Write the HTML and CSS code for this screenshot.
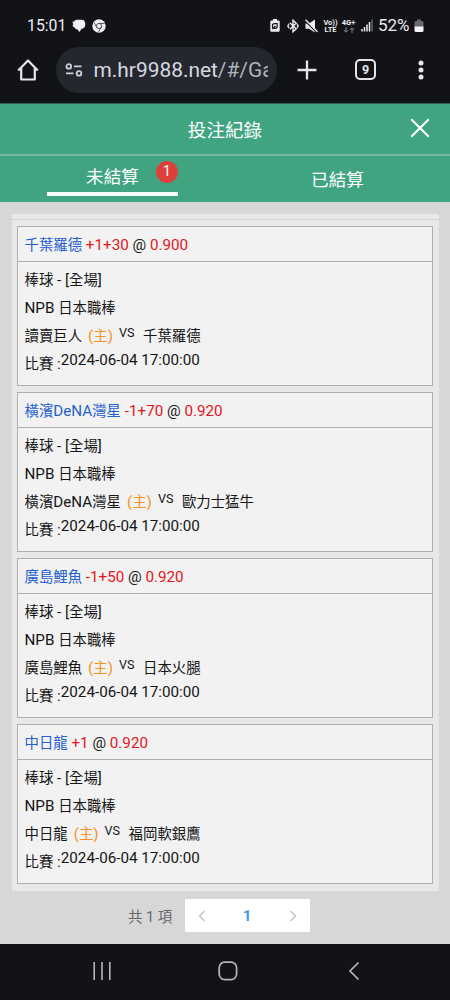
FILE: index.html
```html
<!DOCTYPE html>
<html lang="zh-Hant">
<head>
<meta charset="utf-8">
<title>投注紀錄</title>
<link rel="stylesheet" href="styles.css">
</head>
<body>
<div class="phone">
  <div class="chrome">
    <div class="status">
      <span class="clock">15:01</span>
      <svg class="ic-chat" width="14" height="14" viewBox="0 0 14 14"><path d="M5 .8h4.500C12.200.8 13.300 2.800 13.300 5.200s-1.300 4.600-3.800 4.600L7.500 13 5.300 10.300C3.800 10.200 2.800 9.500 2.400 8.200L.4 7l.9-1.500L.4 2.600 2 2.700C2.600 1.500 3.600.8 5 .8z" fill="#f1f1f3"/></svg>
      <svg class="ic-chrome" width="14" height="14" viewBox="0 0 14 14"><circle cx="7" cy="7" r="6.700" fill="#f1f1f3"/><g fill="none" stroke="#44454a" stroke-width=".9"><circle cx="7" cy="7" r="2.600"/><path d="M7 4.400h5.800M4.750 8.300 1.900 3.300M9.250 8.300 6.400 13.200"/></g></svg>
      <span class="fill"></span>
      <svg class="ic-saver" width="10" height="13" viewBox="0 0 10 13"><path d="M3 0h4v1.500h1.500Q9.700 1.500 9.700 2.800v8.700q0 1.300-1.200 1.300h-7Q.3 12.800.3 11.500V2.800q0-1.300 1.200-1.300H3z" fill="#eee"/><path d="M2.500 9.500V6.500q0-1.800 2.400-1.800h2.300v2.500q0 2-2 2.100H4M2.500 10l3-3" fill="none" stroke="#17181c" stroke-width="1.200"/></svg>
      <svg class="ic-bt" width="12" height="14" viewBox="0 0 12 14"><path d="m2.800 3.700 6.400 6L6 12.800V1.200l3.200 3.100-6.400 6" fill="none" stroke="#eee" stroke-width="1.400"/><path d="M.2 7h2M9.800 7h2M1 5l1 .8M11 5l-1 .8M1 9l1-.8M11 9l-1-.8" stroke="#eee" stroke-width="1.300"/></svg>
      <svg class="ic-mute" width="13" height="14" viewBox="0 0 13 14"><path d="M.5 4.500h3.500l6-4v13L4 9.800H.5z" fill="#eee"/><path d="M0 1.800 12 13.800" stroke="#121317" stroke-width="1.300"/><path d="m.5.800 12 12" stroke="#eee" stroke-width="1.500"/></svg>
      <span class="net volte"><b>Vo))</b><b>LTE</b></span>
      <span class="net data"><b>4G+</b><svg width="12" height="6" viewBox="0 0 12 6"><path d="M3 0v5M.8 3 3 5.200 5.200 3M9 6V1M6.800 3 9 .8 11.200 3" fill="none" stroke="#85868a"/></svg></span>
      <svg class="ic-signal" width="12" height="13" viewBox="0 0 12 13"><path d="M1 10v2.500M3.500 8v4.500M6 5.500v7M8.500 3v9.500" stroke="#eee" stroke-width="1.500"/><path d="M11 .5v12" stroke="#67686c" stroke-width="1.500"/></svg>
      <span class="percent">52%</span>
      <svg class="ic-batt" width="10" height="14" viewBox="0 0 10 14"><path d="M3 .5h4V2h1.200Q9.500 2 9.500 3.500V8h-9V3.500Q.5 2 1.800 2H3z" fill="#68696d"/><path d="M.5 7.500h9v4q0 1.500-1.300 1.500H1.800Q.5 13 .5 11.500z" fill="#f4f4f4"/></svg>
    </div>
    <div class="toolbar">
      <svg class="ic-home" width="22" height="22" viewBox="0 0 22 22"><path d="M1.200 11.500 11 1.500 20.800 11.500M4.200 9v11.500h13.600V9" fill="none" stroke="#e6e6e9" stroke-width="2.200" stroke-linejoin="round"/></svg>
      <div class="address">
        <svg class="ic-tune" width="18" height="14" viewBox="0 0 18 14"><g fill="none" stroke="#cdd0d7" stroke-width="1.800"><circle cx="3.800" cy="3.400" r="2.300"/><path d="M9 3.400h7.500M1 10.400h7.500"/><circle cx="14" cy="10.400" r="2.300"/></g></svg>
        <span class="url">m.hr9988.net<span class="path">/#/Ga</span></span>
      </div>
      <svg class="ic-plus" width="20" height="20" viewBox="0 0 20 20"><path d="M10 .5v19M.5 10h19" stroke="#e6e6e9" stroke-width="2.300"/></svg>
      <span class="tabcount">9</span>
      <svg class="ic-more" width="6" height="20" viewBox="0 0 6 20"><g fill="#e6e6e9"><circle cx="3" cy="2.900" r="2.500"/><circle cx="3" cy="10" r="2.500"/><circle cx="3" cy="17.100" r="2.500"/></g></svg>
    </div>
  </div>

  <header class="header">
    <div class="title">投注紀錄</div>
    <svg class="close" width="20" height="20" viewBox="0 0 20 20"><path d="m1.200 1.200 17.600 17.600M18.800 1.200 1.200 18.800" stroke="#fff" stroke-width="2"/></svg>
  </header>
  <nav class="tabs">
    <div class="tab active"><span class="label">未結算</span><span class="badge">1</span></div>
    <div class="tab"><span class="label">已結算</span></div>
  </nav>

  <main class="content">
    <div class="list">
      <article class="card">
        <div class="pick"><span class="team"><i>千葉羅德</i></span> <span class="odds">+1+30</span> @ <span class="odds">0.900</span></div>
        <div class="detail">
          <p><i>棒球</i> - [<i>全場</i>]</p>
          <p>NPB <i>日本職棒</i></p>
          <p class="match"><span><i>讀賣巨人</i></span><span class="home">(<i>主</i>)</span><span class="vs">VS</span><span><i>千葉羅德</i></span></p>
          <p class="time"><span><i>比賽</i> :</span><span class="date">2024-06-04 17:00:00</span></p>
        </div>
      </article>
      <article class="card">
        <div class="pick"><span class="team"><i>橫濱</i>DeNA<i>灣星</i></span> <span class="odds">-1+70</span> @ <span class="odds">0.920</span></div>
        <div class="detail">
          <p><i>棒球</i> - [<i>全場</i>]</p>
          <p>NPB <i>日本職棒</i></p>
          <p class="match"><span><i>橫濱</i>DeNA<i>灣星</i></span><span class="home">(<i>主</i>)</span><span class="vs">VS</span><span><i>歐力士猛牛</i></span></p>
          <p class="time"><span><i>比賽</i> :</span><span class="date">2024-06-04 17:00:00</span></p>
        </div>
      </article>
      <article class="card">
        <div class="pick"><span class="team"><i>廣島鯉魚</i></span> <span class="odds">-1+50</span> @ <span class="odds">0.920</span></div>
        <div class="detail">
          <p><i>棒球</i> - [<i>全場</i>]</p>
          <p>NPB <i>日本職棒</i></p>
          <p class="match"><span><i>廣島鯉魚</i></span><span class="home">(<i>主</i>)</span><span class="vs">VS</span><span><i>日本火腿</i></span></p>
          <p class="time"><span><i>比賽</i> :</span><span class="date">2024-06-04 17:00:00</span></p>
        </div>
      </article>
      <article class="card">
        <div class="pick"><span class="team"><i>中日龍</i></span> <span class="odds">+1</span> @ <span class="odds">0.920</span></div>
        <div class="detail">
          <p><i>棒球</i> - [<i>全場</i>]</p>
          <p>NPB <i>日本職棒</i></p>
          <p class="match"><span><i>中日龍</i></span><span class="home">(<i>主</i>)</span><span class="vs">VS</span><span><i>福岡軟銀鷹</i></span></p>
          <p class="time"><span><i>比賽</i> :</span><span class="date">2024-06-04 17:00:00</span></p>
        </div>
      </article>
    </div>
    <div class="pagination">
      <span class="total">共 1 項</span>
      <div class="pager">
        <svg width="8" height="12" viewBox="0 0 8 12"><path d="M6.500 1 1.500 6l5 5" fill="none" stroke="#bcbfc4" stroke-width="1.300"/></svg>
        <b>1</b>
        <svg width="8" height="12" viewBox="0 0 8 12"><path d="m1.500 1 5 5-5 5" fill="none" stroke="#bcbfc4" stroke-width="1.300"/></svg>
      </div>
    </div>
  </main>

  <footer class="navbar">
    <svg width="18" height="18" viewBox="0 0 18 18"><path d="M1.200 0v18M9 0v18M16.800 0v18" stroke="#b6b6b8" stroke-width="1.600"/></svg>
    <svg class="nav-home" width="20" height="20" viewBox="0 0 20 20"><rect x="1.200" y="1.200" width="17.400" height="17.400" rx="5.500" fill="none" stroke="#b6b6b8" stroke-width="1.700"/></svg>
    <svg width="12" height="20" viewBox="0 0 12 20"><path d="M10.500 1.500 2 10l8.500 8.500" fill="none" stroke="#b6b6b8" stroke-width="1.700"/></svg>
  </footer>
</div>
</body>
</html>
```
FILE: styles.css
```css
* { box-sizing: border-box; }
body {
  margin: 0;
  font-family: Roboto, "Noto Sans CJK TC", sans-serif;
  font-size: 15.2px;
  color: #161616;
}
svg { display: block; flex: none; }
i { font-style: normal; font-size: 14.400px; }
p { margin: 0; }
.phone {
  width: 450px;
  height: 1000px;
  display: flex;
  flex-direction: column;
  overflow: hidden;
  background: #d7d7d7;
}

/* browser chrome */
.chrome { height: 104px; background: #121317; border-bottom: 1px solid #365f50; flex: none; }
.status {
  display: flex;
  align-items: center;
  height: 46px;
  padding: 5px 26px 0 27px;
  color: #ececee;
}
.clock { font-size: 15.800px; width: 38px; white-space: nowrap; }
.ic-chat { margin-left: 7px; }
.ic-chrome { margin-left: 6px; }
.fill { flex: 1; }
.ic-saver { margin-right: 1px; }
.ic-bt { margin-left: 6px; }
.ic-mute { margin-left: 6px; }
.net {
  display: flex;
  flex-direction: column;
  align-items: center;
  justify-content: center;
  font-size: 7.500px;
  line-height: 7px;
  width: 14px;
}
.volte { margin-left: 6px; }
.data { margin-left: 4px; }
.net svg { margin-top: 1px; }
.ic-signal { margin-left: 5px; }
.percent { font-size: 17px; margin: -1px 0 0 5.500px; width: 35px; white-space: nowrap; }
.ic-batt { margin-left: 1px; }
.toolbar { display: flex; align-items: center; height: 47px; padding-left: 17px; }
.address {
  display: flex;
  align-items: center;
  width: 221px;
  height: 46px;
  margin-left: 17px;
  padding-left: 9px;
  border-radius: 23px;
  background: #25272f;
}
.url {
  width: 174px;
  margin-left: 10.500px;
  overflow: hidden;
  white-space: nowrap;
  font-size: 20.900px;
  color: #d5d8e0;
}
.path { color: #b0b3bb; }
.ic-plus { margin-left: 20px; }
.tabcount {
  width: 21px;
  height: 21px;
  margin-left: 38px;
  border: 2px solid #e6e6e9;
  border-radius: 5px;
  color: #e6e6e9;
  font-size: 12.500px;
  font-weight: 700;
  line-height: 17px;
  text-align: center;
}
.ic-more { margin-left: 42px; }

/* page header */
.header {
  display: flex;
  align-items: center;
  justify-content: center;
  position: relative;
  flex: none;
  height: 52px;
  background: #41a481;
  border-bottom: 2px solid #74b99f;
  color: #fff;
}
.title { font-size: 18.600px; line-height: 26px; padding-top: 3px; }
.close { position: absolute; right: 20.500px; top: 14px; }
.tabs { display: flex; flex: none; height: 46px; background: #41a481; color: #fff; }
.tab { position: relative; flex: 1; text-align: center; padding-top: 11px; }
.label { display: block; font-size: 17.600px; line-height: 27px; }
.active { flex: none; width: 131px; height: 40px; margin: 0 47px; padding-top: 8px; border-bottom: 4px solid #f2fbf8; }
.badge {
  position: absolute;
  right: 0;
  top: 5px;
  width: 22px;
  height: 22px;
  border-radius: 50%;
  background: #dd3f3b;
  font-size: 14px;
  line-height: 21px;
}

/* bet list */
.content { flex: 1; padding: 12px 11.500px 0; }
.list {
  height: 677px;
  padding: 6px 6px 0 5.500px;
  background: #e8e8e8;
  display: flex;
  flex-direction: column;
  gap: 6px;
}
.list::before { content: ""; height: 1px; margin: -1px -6px 0; background: #d0d0d0; flex: none; }
.card { height: 160px; border: 1px solid #b0b0b0; background: #f2f2f2; flex: none; }
.pick { height: 35px; padding: 1px 7px 0 6.500px; border-bottom: 1px solid #b0b0b0; line-height: 34px; white-space: nowrap; }
.team { color: #2560cf; }
.odds { color: #e3141b; }
.detail { padding: 4px 7px 0 6.500px; }
.detail p { height: 28px; line-height: 28px; white-space: nowrap; }
.match, .time { display: flex; }
.home { margin-left: 6px; color: #f39325; }
.vs { margin: -3.500px 8.500px 0 6px; font-size: 12.600px; }
.time > span:first-child { width: 36.300px; }
.date { margin-top: -4px; }

.pagination { display: flex; align-items: center; height: 49px; padding-left: 116.500px; }
.total { width: 56.500px; font-size: 14.500px; color: #66686c; white-space: nowrap; }
.pager {
  display: flex;
  align-items: center;
  justify-content: space-between;
  width: 125px;
  height: 33px;
  padding: 0 13px;
  background: #fff;
  color: #4497ed;
}

.navbar {
  display: flex;
  justify-content: space-between;
  align-items: center;
  flex: none;
  height: 56px;
  padding: 0 90px 3px 93px;
  background: #121317;
}
.nav-home { margin: 0 4px 0 0; }
```
